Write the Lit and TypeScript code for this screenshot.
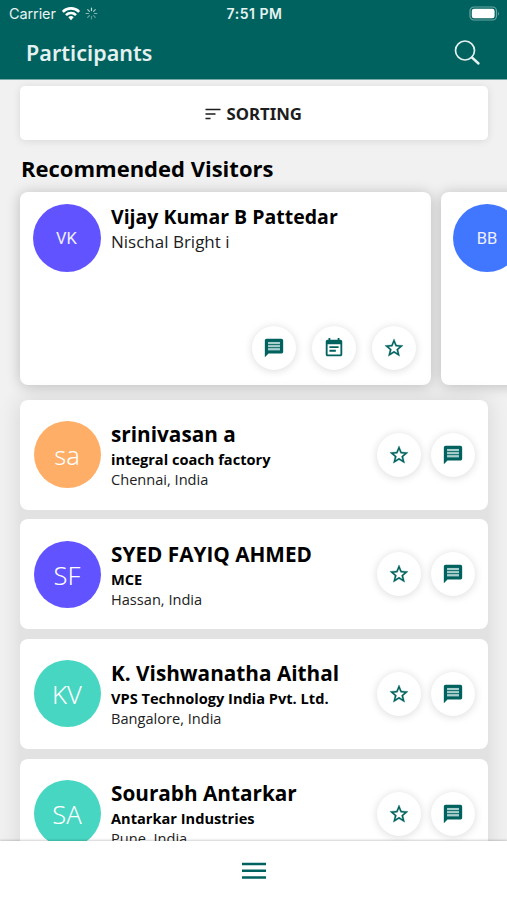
import { LitElement, html, svg, css } from "lit";
import { customElement, property } from "lit/decorators.js";

const GLYPHS: Record<string, unknown> = {
  chat: svg`<path d="M20 2H4c-1.100 0-1.990.9-1.990 2L2 22l4-4h14c1.100 0 2-.9 2-2V4c0-1.100-.9-2-2-2z" fill="currentColor"/><path d="M5.500 5.400h13v9.200h-13z" fill="#a9cfcd"/><path d="M5.500 8.300h13M5.500 11.600h13" stroke="#00625f" stroke-width="1"/>`,
  event: svg`<path d="M17 10H7v2h10v-2zm2-7h-1V1h-2v2H8V1H6v2H5c-1.110 0-1.990.9-1.990 2L3 19c0 1.100.89 2 2 2h14c1.100 0 2-.9 2-2V5c0-1.100-.9-2-2-2zm0 16H5V8h14v11zm-5-5H7v2h7v-2z" fill="currentColor"/>`,
  star: svg`<path d="M22 9.240l-7.190-.62L12 2 9.190 8.630 2 9.240l5.460 4.730L5.820 21 12 17.270 18.180 21l-1.630-7.030L22 9.240zM12 15.400l-3.760 2.270 1-4.280-3.320-2.880 4.380-.38L12 6.100l1.710 4.040 4.380.38-3.320 2.880 1 4.280L12 15.400z" fill="currentColor" stroke="currentColor" stroke-width="0.300"/>`,
};

@customElement("round-action")
export class RoundAction extends LitElement {
  @property() icon = "star";

  static styles = css`
    :host { display: block; flex: none; }
    .button {
      width: 44px; height: 44px; padding: 0; border: 0; border-radius: 50%;
      background: #fff; color: #00625f; display: grid; place-items: center;
      box-shadow: 0 1px 8px rgba(0, 0, 0, 0.15);
    }
    .glyph { width: 22px; height: 22px; display: block; }
  `;

  render() {
    return html`<button class="button" aria-label=${this.icon}>
      <svg class="glyph" viewBox="0 0 24 24">${GLYPHS[this.icon]}</svg>
    </button>`;
  }
}

@customElement("status-bar")
export class StatusBar extends LitElement {
  static styles = css`
    :host {
      display: grid; grid-template-columns: 1fr auto 1fr; align-items: center;
      height: 27px; padding: 0 7px 0 9px; color: #e6f3f2;
      font: 14.500px/27px Inter, sans-serif;
    }
    .left { display: flex; align-items: center; }
    .carrier { letter-spacing: -0.1px; width: 52px; white-space: nowrap; }
    .time { font-weight: 600; font-size: 14px; letter-spacing: 0.500px; }
    .wifi { width: 20px; height: 15px; }
    .spin { width: 13px; height: 13px; margin-left: 4px; }
    .battery { width: 31px; height: 15px; justify-self: end; }
  `;

  render() {
    const spokes = [0.9, 0.75, 0.6, 0.45, 0.4, 0.5, 0.65, 0.8];
    return html`
      <div class="left">
        <span class="carrier">Carrier</span>
        <svg class="wifi" viewBox="0 0 20 15" fill="none" stroke="#fff" stroke-width="2.600">
          <path d="M1.800 5.800a11.600 11.600 0 0 1 16.400 0M5 9.100a7 7 0 0 1 10 0" />
          <path d="M10 14.200l-2.700-2.900a3.900 3.900 0 0 1 5.400 0z" fill="#fff" stroke="none" />
        </svg>
        <svg class="spin" viewBox="0 0 14 14" stroke="#d5e8e7" stroke-width="1.300" stroke-linecap="round">
          ${spokes.map((o, i) => svg`<path d="M7 1.200v2.600" opacity=${o} transform="rotate(${i * 45} 7 7)"/>`)}
        </svg>
      </div>
      <span class="time">7:51 PM</span>
      <svg class="battery" viewBox="0 0 31 15">
        <rect x="1" y="1" width="26.500" height="13" rx="4" fill="none" stroke="#6aa5a3" stroke-width="1.200" />
        <rect x="2.800" y="2.800" width="22.800" height="9.400" rx="2.300" fill="#fff" />
        <path d="M29 5.200q1.700 2.300 0 4.600z" fill="#6aa5a3" />
      </svg>
    `;
  }
}

interface Person {
  initials: string;
  color: string;
  name: string;
  company: string;
  place: string;
}

const PEOPLE: Person[] = [
  { initials: "sa", color: "#feae66", name: "srinivasan a", company: "integral coach factory", place: "Chennai, India" },
  { initials: "SF", color: "#6153ff", name: "SYED FAYIQ AHMED", company: "MCE", place: "Hassan, India" },
  { initials: "KV", color: "#46d6c2", name: "K. Vishwanatha Aithal", company: "VPS Technology India Pvt. Ltd.", place: "Bangalore, India" },
  { initials: "SA", color: "#46d6c2", name: "Sourabh Antarkar", company: "Antarkar Industries", place: "Pune, India" },
];

@customElement("participant-card")
export class ParticipantCard extends LitElement {
  @property({ attribute: false }) person!: Person;

  static styles = css`
    :host {
      display: flex; box-sizing: border-box; height: 110px; flex: none;
      padding: 0 12.500px 0 13.500px; align-items: center; background: #fff;
      border-radius: 8px;
    }
    .avatar {
      width: 67px; height: 67px; flex: none; border-radius: 50%; color: #fff;
      font: 400 25.500px/69px "Noto Sans", sans-serif; font-weight: 350; text-align: center;
    }
    .text { flex: 1; min-width: 0; margin-left: 10.500px; white-space: nowrap; color: #000; }
    .name { font: 700 20.750px/29px "Open Sans", sans-serif; }
    .company { font: 700 14.600px/20px "Open Sans", sans-serif; }
    .place { font: 400 14.600px/20px "Open Sans", sans-serif; color: #222; }
    .actions { display: flex; gap: 10px; }
  `;

  render() {
    const p = this.person;
    return html`
      <div class="avatar" style="background:${p.color}">${p.initials}</div>
      <div class="text">
        <div class="name">${p.name}</div>
        <div class="company">${p.company}</div>
        <div class="place">${p.place}</div>
      </div>
      <div class="actions">
        <round-action icon="star"></round-action>
        <round-action icon="chat"></round-action>
      </div>
    `;
  }
}

@customElement("visitor-card")
export class VisitorCard extends LitElement {
  @property() initials = "";
  @property() color = "";
  @property() name = "";
  @property() company = "";

  static styles = css`
    :host {
      display: flex; flex-direction: column; justify-content: space-between;
      box-sizing: border-box; width: 410.500px; height: 192.500px; flex: none;
      padding: 12px 14.500px 14.500px 12.500px; background: #fff; border-radius: 8px;
      box-shadow: 0 1px 14px rgba(0, 0, 0, 0.22);
    }
    .top { display: flex; }
    .avatar {
      width: 68px; height: 68px; flex: none; border-radius: 50%; color: #f0efff;
      font: 400 16.500px/69px Roboto, sans-serif; text-align: center;
    }
    .text { margin-left: 10.500px; white-space: nowrap; color: #000; }
    .name { font: 700 19.500px/26px "Open Sans", sans-serif; }
    .company { font: 400 17px/24px "Open Sans", sans-serif; color: #1c1c1c; }
    .actions { display: flex; justify-content: flex-end; gap: 16px; }
  `;

  render() {
    return html`
      <div class="top">
        <div class="avatar" style="background:${this.color}">${this.initials}</div>
        <div class="text">
          <div class="name">${this.name}</div>
          <div class="company">${this.company}</div>
        </div>
      </div>
      <div class="actions">
        <round-action icon="chat"></round-action>
        <round-action icon="event"></round-action>
        <round-action icon="star"></round-action>
      </div>
    `;
  }
}

@customElement("app-root")
export class AppRoot extends LitElement {
  static styles = css`
    :host {
      display: flex; flex-direction: column; width: 507px; height: 900px;
      overflow: hidden; background: #f1f1f1; color: #000;
    }
    .header { flex: none; height: 79px; background: #00625f; box-shadow: 0 1px 0 #79aaa8; z-index: 1; }
    .bar { display: flex; align-items: center; justify-content: space-between; height: 52px; padding: 0 26px; }
    .title {
      margin: 0; color: #e4f1f0; letter-spacing: 0.050px;
      font: 600 21.500px/52px "Noto Sans", sans-serif;
    }
    .search { width: 27px; height: 27px; display: block; }
    .content {
      flex: 1; min-height: 0; overflow: hidden; padding: 7px 19.500px 0 20px;
      display: flex; flex-direction: column;
    }
    .sorting {
      flex: none; height: 54px; border: 0; border-radius: 5px; background: #fff;
      display: flex; align-items: center; justify-content: center; gap: 5px; padding: 1px 0 0;
      box-shadow: 0 1px 9px rgba(0, 0, 0, 0.1); color: #1d1d1d;
      font: 700 16.800px/24px "Noto Sans", sans-serif;
    }
    .lines { width: 16px; height: 12px; }
    .heading { margin: 13px 0 0 1px; flex: none; height: 39px; font: 700 22px/30px "Open Sans", sans-serif; }
    .visitors { display: flex; flex: none; gap: 10px; }
    .people { display: flex; flex-direction: column; gap: 9.700px; margin-top: 15px; border-radius: 8px; background: #e2e2e2; box-shadow: 0 0 22px 1px rgba(0, 0, 0, 0.11); }
    .nav {
      flex: none; height: 59px; background: #fff; display: grid; place-items: center;
      box-shadow: 0 -1px 2px rgba(0, 0, 0, 0.18); z-index: 1;
    }
    .menu { width: 24px; height: 18px; display: block; }
  `;

  render() {
    return html`
      <header class="header">
        <status-bar></status-bar>
        <div class="bar">
          <h1 class="title">Participants</h1>
          <svg class="search" viewBox="0 0 27 27" fill="none" stroke="#e4f1f0" stroke-linecap="round">
            <circle cx="11" cy="10.500" r="9.500" stroke-width="1.700" />
            <path d="M18 17.500l6.500 6" stroke-width="2.400" />
          </svg>
        </div>
      </header>
      <main class="content">
        <button class="sorting">
          <svg class="lines" viewBox="0 0 16 12" stroke="#1d1d1d" stroke-width="1.500">
            <path d="M0.500 1.500h15M0.500 6h10M0.500 10.500h5" />
          </svg>
          <span>SORTING</span>
        </button>
        <h2 class="heading">Recommended Visitors</h2>
        <section class="visitors">
          <visitor-card initials="VK" color="#6153ff" name="Vijay Kumar B Pattedar" company="Nischal Bright i"></visitor-card>
          <visitor-card initials="BB" color="#4176ff"></visitor-card>
        </section>
        <section class="people">
          ${PEOPLE.map((p) => html`<participant-card .person=${p}></participant-card>`)}
        </section>
      </main>
      <nav class="nav">
        <svg class="menu" viewBox="0 0 24 18" stroke="#00625f" stroke-width="2.600">
          <path d="M0 2h24M0 8.800h24M0 15.500h24" />
        </svg>
      </nav>
    `;
  }
}
